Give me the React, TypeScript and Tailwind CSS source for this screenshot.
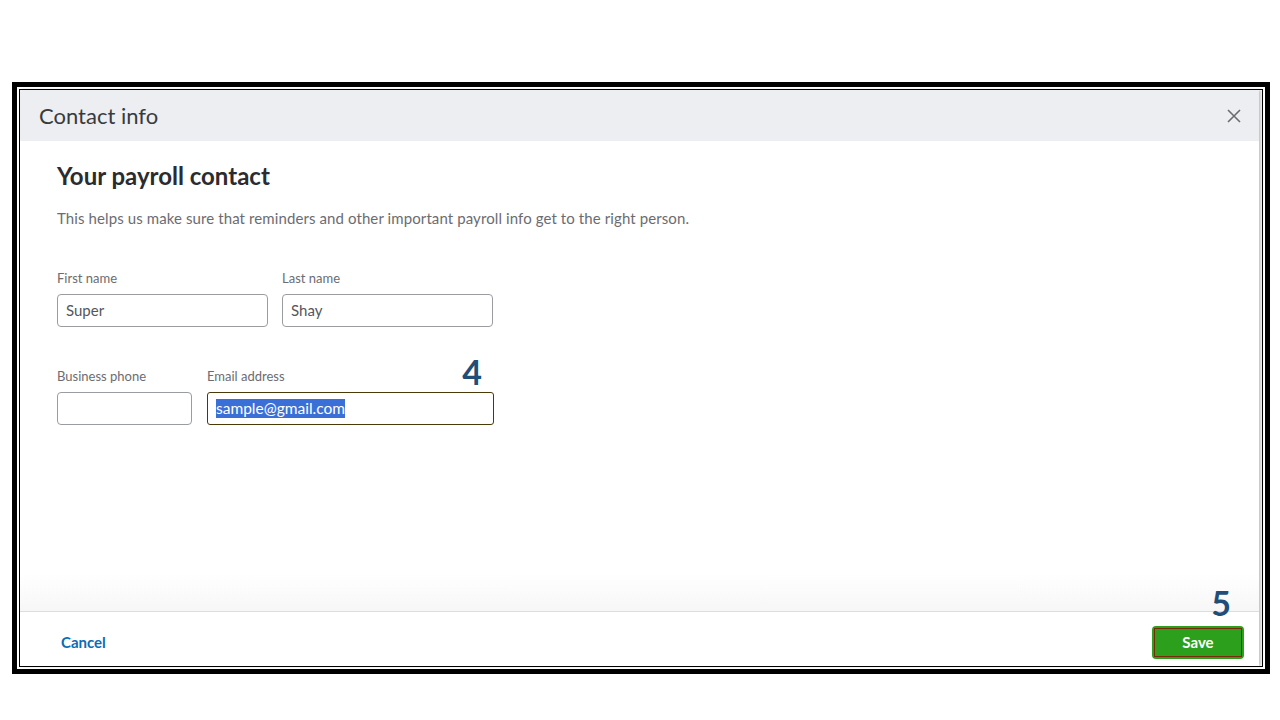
import React from 'react';

const font = { fontFamily: 'Lato, "Open Sans", sans-serif' };

function Field({ label, value, width }: { label: string; value: string; width: string }) {
  return (
    <div className={width}>
      <label className="block text-[13px] text-[#6b6c72] mb-[8px] leading-4">{label}</label>
      <div className="h-[33px] border border-[#9a9ca1] rounded-[4px] px-2 flex items-center text-[15px] text-[#55565b]">
        {value}
      </div>
    </div>
  );
}

export default function App() {
  return (
    <div className="w-[1280px] h-[720px] bg-white pt-[82px] pl-[12px]" style={font}>
      {/* screenshot frame */}
      <div className="w-[1258px] h-[592px] border-[5px] border-black p-[2px] bg-white">
        <div className="h-full border border-black bg-white flex">
          <div className="flex-1 flex flex-col mr-[3px] shadow-[2px_0_3px_rgba(0,0,0,0.25)]">
            {/* Header */}
            <div className="h-[51px] bg-[#eceef1] flex items-center justify-between pl-[19px] pr-[17px]">
              <h2 className="text-[22px] text-[#393a3d] leading-none">Contact info</h2>
              <svg className="h-4 w-4 text-[#6b6c72]" viewBox="0 0 16 16" fill="none" stroke="currentColor" strokeWidth={1.6}>
                <path d="M2 2l12 12M14 2L2 14" />
              </svg>
            </div>

            {/* Body */}
            <div className="flex-1 pl-[37px] pt-[21px] bg-gradient-to-b from-white from-92% to-[#f7f7f8]">
              <h3 className="text-[24px] font-bold text-[#2b2c2f] leading-7">Your payroll contact</h3>
              <p className="mt-[18px] text-[15px] tracking-[0.1px] text-[#6b6c72] leading-5">
                This helps us make sure that reminders and other important payroll info get to the right person.
              </p>

              <div className="mt-[42px] flex gap-[14px]">
                <Field label="First name" value="Super" width="w-[211px]" />
                <Field label="Last name" value="Shay" width="w-[211px]" />
              </div>

              <div className="mt-[41px] flex gap-[15px]">
                <Field label="Business phone" value="" width="w-[135px]" />
                <div className="w-[287px] relative">
                  <label className="block text-[13px] text-[#6b6c72] mb-[8px] leading-4">Email address</label>
                  <span className="absolute right-[12px] top-[-13px] text-[34px] font-bold text-[#1f4e79] leading-none">4</span>
                  <div className="h-[33px] border-[1.5px] border-[#4a3a08] rounded-[3px] px-2 flex items-center text-[15.5px]">
                    <span className="bg-[#3a6fd8] text-white leading-[19px]">sample@gmail.com</span>
                  </div>
                </div>
              </div>
            </div>

            {/* Footer */}
            <div className="h-[55px] border-t border-[#dcdde0] flex items-center justify-between pt-[6px] pl-[41px] pr-[15px] relative">
              <button className="text-[15px] font-bold text-[#0d6bb5]">Cancel</button>
              <span className="absolute right-[28px] top-[-26px] text-[34px] font-bold text-[#1f4e79] leading-none">5</span>
              <button className="w-[92px] h-[33px] rounded-[4px] bg-[#2ca01c] p-[2px]">
                <span className="flex h-full items-center justify-center border border-[#7a2a0a] text-white text-[15px] font-bold">
                  Save
                </span>
              </button>
            </div>
          </div>
        </div>
      </div>
    </div>
  );
}
